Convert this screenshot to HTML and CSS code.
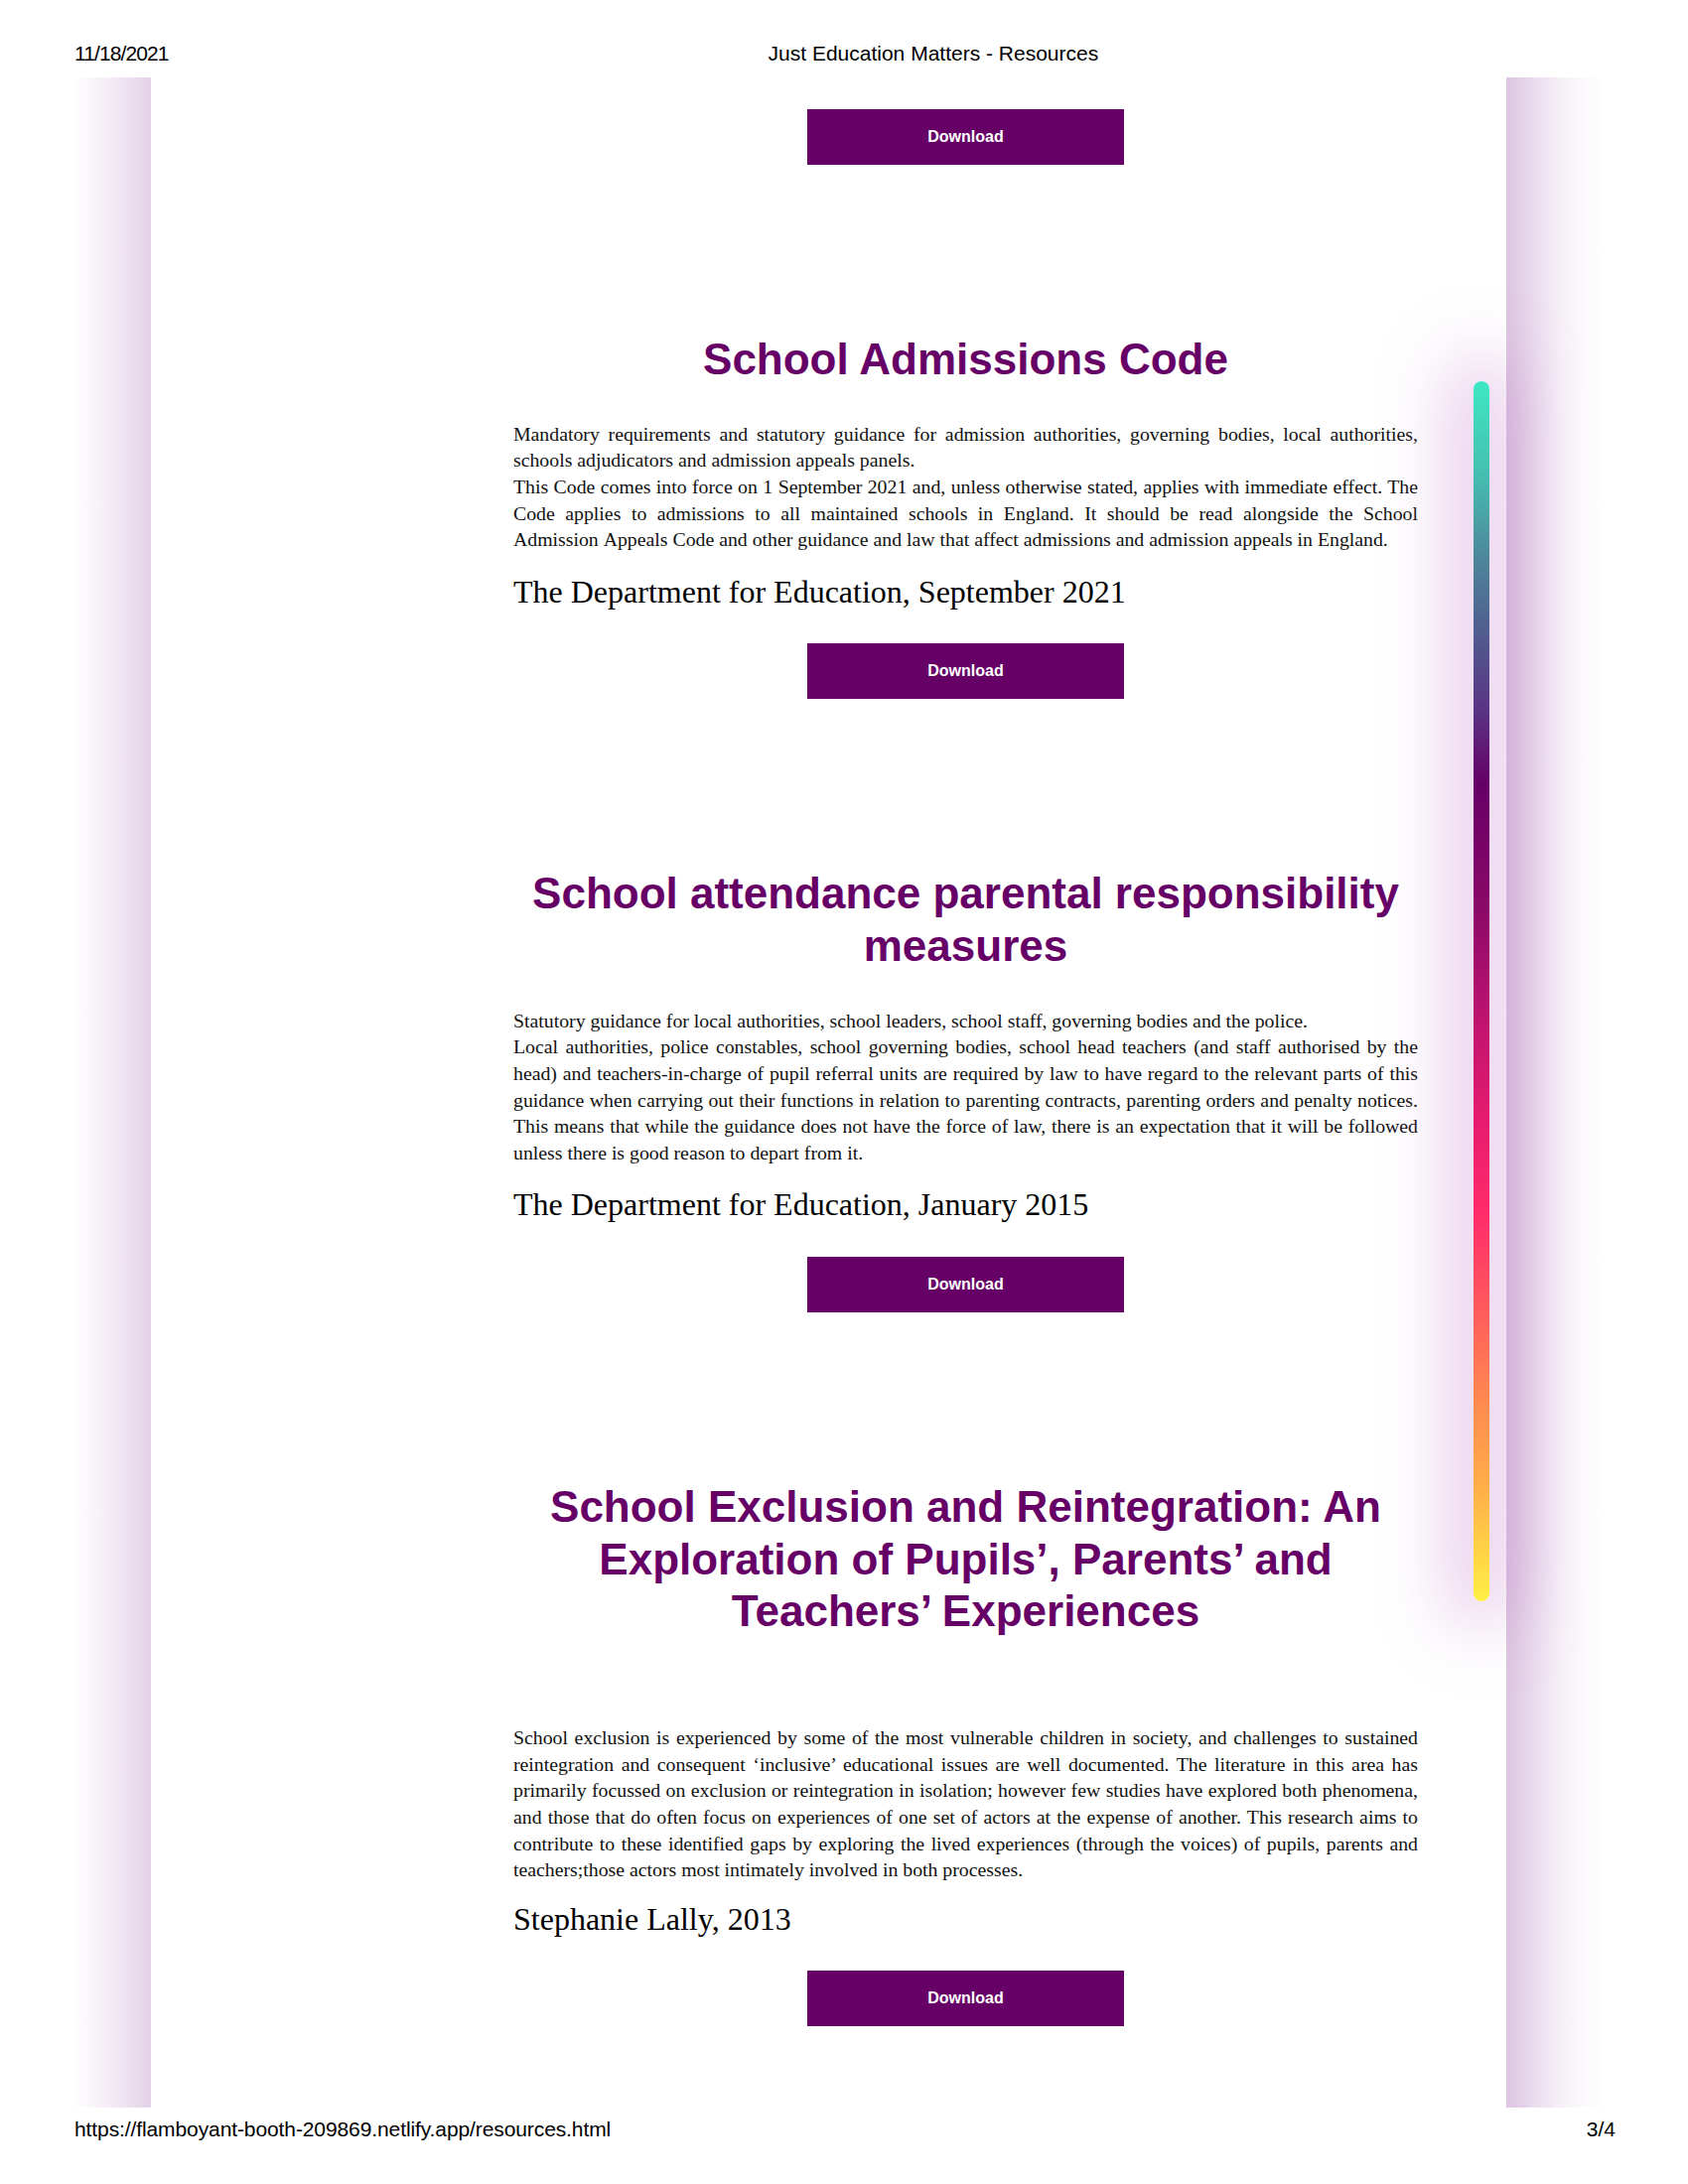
FILE: index.html
```html
<!DOCTYPE html>
<html lang="en">
<head>
<meta charset="utf-8">
<title>Just Education Matters - Resources</title>
<link rel="stylesheet" href="styles.css">
</head>
<body>
<div class="sheet">
  <header class="print-head">
    <span class="print-date">11/18/2021</span>
    <span class="print-title">Just Education Matters - Resources</span>
  </header>

  <div class="viewport">
    <div class="strip strip-left"></div>

    <main class="page">
      <div class="content">
        <a class="btn" href="#">Download</a>

        <section class="resource">
          <h2 class="res-title">School Admissions Code</h2>
          <p class="res-text">Mandatory requirements and statutory guidance for admission authorities, governing bodies, local authorities, schools adjudicators and admission appeals panels.<br>This Code comes into force on 1 September 2021 and, unless otherwise stated, applies with immediate effect. The Code applies to admissions to all maintained schools in England. It should be read alongside the School Admission&nbsp;Appeals Code and other guidance and law that affect admissions and admission appeals in England.</p>
          <h3 class="res-source">The Department for Education, September 2021</h3>
          <a class="btn" href="#">Download</a>
        </section>

        <section class="resource">
          <h2 class="res-title">School attendance parental responsibility measures</h2>
          <p class="res-text">Statutory guidance for local authorities, school leaders, school staff, governing bodies and the police.<br>Local authorities, police constables, school governing bodies, school head teachers (and staff authorised by the head) and teachers-in-charge of pupil referral units are required by law to have regard to the relevant parts of this guidance when carrying out their functions in relation to parenting contracts, parenting orders and penalty notices. This means that while the guidance does not have the force of law, there is an expectation that it will be followed unless there is good reason to depart from it.</p>
          <h3 class="res-source">The Department for Education, January 2015</h3>
          <a class="btn" href="#">Download</a>
        </section>

        <section class="resource">
          <h2 class="res-title res-title-spaced">School Exclusion and Reintegration: An Exploration of Pupils’, Parents’ and Teachers’ Experiences</h2>
          <p class="res-text">School exclusion is experienced by some of the most vulnerable children in society, and challenges to sustained reintegration and consequent ‘inclusive’ educational issues are well documented. The literature in this area has primarily focussed on exclusion or reintegration in isolation; however few studies have explored both phenomena, and those that do often focus on experiences of one set of actors at the expense of another. This research aims to contribute to these identified gaps by exploring the lived experiences (through the voices) of pupils, parents and teachers;those actors most intimately involved in both processes.</p>
          <h3 class="res-source res-source-tight">Stephanie Lally, 2013</h3>
          <a class="btn" href="#">Download</a>
        </section>
      </div>

      <div class="scroll-thumb"></div>
    </main>

    <div class="strip strip-right"></div>
  </div>

  <footer class="print-foot">
    <span class="print-url">https://flamboyant-booth-209869.netlify.app/resources.html</span>
    <span class="print-page">3/4</span>
  </footer>
</div>
</body>
</html>
```

FILE: styles.css
```css
html, body {
  margin: 0;
  padding: 0;
  background: #fff;
}

body {
  width: 1700px;
  height: 2200px;
  overflow: hidden;
  font-family: "Liberation Sans", Arial, sans-serif;
  color: #000;
}

.sheet {
  display: flex;
  flex-direction: column;
  width: 1700px;
  height: 2200px;
}

/* print header */
.print-head {
  display: flex;
  height: 78px;
  box-sizing: border-box;
  padding: 42px 0 0 75px;
  font-size: 21px;
  line-height: 24px;
}

.print-date {
  letter-spacing: -0.9px;
}

.print-title {
  margin-left: 604px;
}

/* viewport row */
.viewport {
  display: flex;
  height: 2045px;
  padding-left: 77px;
}

.strip-left {
  width: 75px;
  background: linear-gradient(to right, #fefcfe 0%, #f6eef7 40%, #e3d1e7 100%);
}

.strip-right {
  width: 98px;
  background: linear-gradient(to right, #dcc5e0 0%, #e8d8ec 25%, #f6eff7 55%, #fdfbfd 85%, #ffffff 100%);
}

.page {
  position: relative;
  width: 1365px;
  background: #fff;
}

.content {
  box-sizing: border-box;
  padding: 32px 89px 0 365px;
}

/* button */
.btn {
  display: block;
  width: 319px;
  height: 56px;
  margin: 0 auto;
  background: #660066;
  color: #fff;
  font-family: "Liberation Sans", Arial, sans-serif;
  font-weight: 700;
  font-size: 16px;
  line-height: 56px;
  text-align: center;
  text-decoration: none;
}

/* resource blocks */
.resource {
  margin-top: 168px;
}

.res-title {
  margin: 0 0 35px;
  padding-top: 2px;
  font-family: "Liberation Sans", Arial, sans-serif;
  font-weight: 700;
  font-size: 44px;
  line-height: 52.8px;
  color: #660066;
  text-align: center;
}

.res-title-spaced {
  margin-bottom: 87px;
}

.res-text {
  margin: 0;
  font-family: "Liberation Serif", "Times New Roman", serif;
  font-size: 19.8px;
  line-height: 26.6px;
  text-align: justify;
  color: #111;
}

.res-source {
  margin: 22px 0 34px;
  font-family: "Liberation Serif", "Times New Roman", serif;
  font-weight: 400;
  font-size: 32px;
  line-height: 35.4px;
  color: #000;
}

.res-source-tight {
  margin-top: 19px;
}

/* overlay scrollbar */
.scroll-thumb {
  position: absolute;
  left: 1332px;
  top: 306px;
  width: 16px;
  height: 1229px;
  border-radius: 8px;
  background: linear-gradient(to bottom,
    #3ee8c4 0%,
    #46bcb0 8%,
    #4d8a9c 14%,
    #515a8e 21%,
    #5a3484 27%,
    #660066 33%,
    #8a0868 43%,
    #c21470 53%,
    #e81c6e 61%,
    #ff2a6a 68%,
    #ff5a5c 76%,
    #ff8c50 84%,
    #ffb048 91%,
    #fff044 100%);
  box-shadow: 0 0 70px 24px rgba(185, 105, 195, 0.36);
}

/* print footer */
.print-foot {
  display: flex;
  justify-content: space-between;
  box-sizing: border-box;
  padding: 10px 73px 0 75px;
  font-size: 21px;
  line-height: 24px;
}

.print-url {
  letter-spacing: -0.1px;
}
```
